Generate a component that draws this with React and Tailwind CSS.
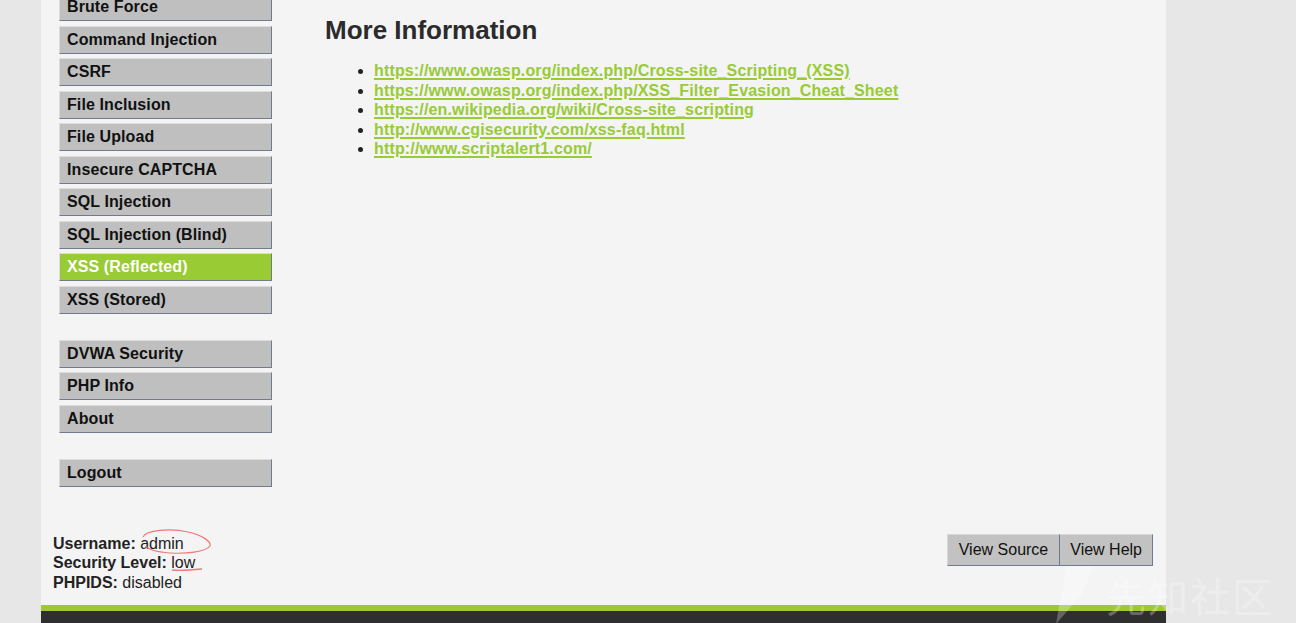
import React from 'react';

const menuTop = ['Brute Force', 'Command Injection', 'CSRF', 'File Inclusion', 'File Upload', 'Insecure CAPTCHA', 'SQL Injection', 'SQL Injection (Blind)', 'XSS (Reflected)', 'XSS (Stored)'];
const menuMid = ['DVWA Security', 'PHP Info', 'About'];

const links = [
  'https://www.owasp.org/index.php/Cross-site_Scripting_(XSS)',
  'https://www.owasp.org/index.php/XSS_Filter_Evasion_Cheat_Sheet',
  'https://en.wikipedia.org/wiki/Cross-site_scripting',
  'http://www.cgisecurity.com/xss-faq.html',
  'http://www.scriptalert1.com/',
];

function MenuItem({ label, active }) {
  return (
    <li
      className={`h-[28px] mb-[4.5px] pl-[7px] flex items-center font-bold text-[16px] tracking-[0.1px] border-t border-l border-t-[#dcdcdc] border-l-[#dcdcdc] border-b border-r border-b-[#6e7c8e] border-r-[#6e7c8e] ${
        active ? 'bg-[#98cb34] text-white' : 'bg-[#bfbfbf] text-[#111]'
      }`}
    >
      {label}
    </li>
  );
}

export default function App() {
  return (
    <div className="min-h-screen h-[623px] overflow-hidden bg-[#e7e7e7] font-['Liberation_Sans',Arial,sans-serif] relative">
      <div className="ml-[41px] w-[1125px] h-[623px] bg-[#f4f4f4] flex flex-col">
        <div className="flex flex-1">
          {/* sidebar menu */}
          <div className="w-[284px] pl-[18px] pr-[53px]">
            <ul className="mt-[-7px]">
              {menuTop.map((m) => (
                <MenuItem key={m} label={m} active={m === 'XSS (Reflected)'} />
              ))}
            </ul>
            <ul className="mt-[26px]">
              {menuMid.map((m) => (
                <MenuItem key={m} label={m} />
              ))}
            </ul>
            <ul className="mt-[26px]">
              <MenuItem label="Logout" />
            </ul>
          </div>

          {/* main body */}
          <div className="flex-1">
            <h2 className="text-[26px] font-bold text-[#2b2b2b] mt-[14px] leading-[32px]">More Information</h2>
            <ul className="mt-[15px] pl-[49px] list-disc text-[16px] leading-[19.5px] text-[#222]">
              {links.map((l) => (
                <li key={l}>
                  <a href="#" className="font-bold tracking-[0.15px] text-[#98cb34] underline decoration-2 underline-offset-[2px]">
                    {l}
                  </a>
                </li>
              ))}
            </ul>
          </div>
        </div>

        {/* user info + view buttons */}
        <div className="flex items-end justify-between pl-[12px] pr-[13px] pb-[13px]">
          <div className="text-[16px] leading-[19.5px] text-[#222]">
            <div><b>Username:</b> admin</div>
            <div><b>Security Level:</b> low</div>
            <div><b>PHPIDS:</b> disabled</div>
          </div>
          <div className="flex mb-[26px]">
            <button className="h-[32px] px-[11px] bg-[#c2c2c2] text-[16px] text-[#111] border-t border-l border-t-[#d8d8d8] border-l-[#d8d8d8] border-b border-r border-b-[#6e7c8e] border-r-[#6e7c8e]">
              View Source
            </button>
            <button className="h-[32px] px-[10px] bg-[#c2c2c2] text-[16px] text-[#111] border-t border-t-[#d8d8d8] border-b border-r border-b-[#6e7c8e] border-r-[#6e7c8e]">
              View Help
            </button>
          </div>
        </div>

        {/* footer */}
        <div className="h-[6px] bg-[#9fc834]" />
        <div className="h-[12px] bg-[#2f2f2f]" />
      </div>

      {/* red pen marks on the screenshot */}
      <svg className="absolute left-[130px] top-[520px] pointer-events-none" width="90" height="56" viewBox="0 0 90 56">
        <path d="M13 17 C 16 10, 40 8, 58 12 C 72 15, 82 22, 80 26 C 76 32, 55 34, 40 33 C 28 32, 18 30, 16 26" fill="none" stroke="#f07878" strokeWidth="1.2" />
        <path d="M42 50 C 50 51, 62 50, 72 49" fill="none" stroke="#f07878" strokeWidth="1.3" />
      </svg>

      {/* watermark */}
      <div className="absolute left-[1052px] top-[566px] text-[40px] leading-[50px] text-white/30 tracking-[2px] whitespace-nowrap font-['Noto_Sans_CJK_SC',sans-serif] pointer-events-none flex items-center">
        <svg width="50" height="58" viewBox="0 0 50 58" className="mr-[4px]">
          <path d="M14 0 L42 0 L30 28 L4 58 Z" fill="white" fillOpacity="0.25" />
        </svg>
        先知社区
      </div>
    </div>
  );
}
